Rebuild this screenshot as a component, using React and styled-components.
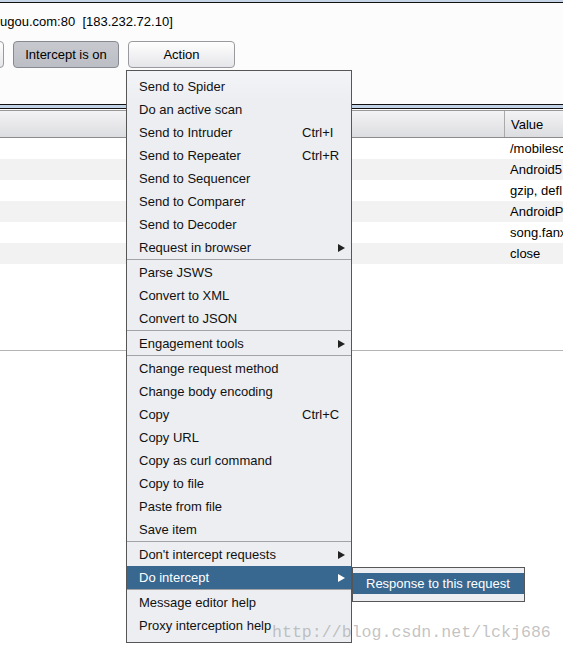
import React from 'react';
import styled, { createGlobalStyle } from 'styled-components';

const GlobalStyle = createGlobalStyle`
  html, body {
    margin: 0;
    padding: 0;
    background: #fff;
    overflow: hidden;
  }
  body {
    font-family: "Liberation Sans", Arial, sans-serif;
    font-size: 13px;
    color: #000;
  }
`

const Page = styled.div`
  position: relative;
  width: 563px;
  height: 655px;
  overflow: hidden;
  background: #fff;
`
const TopEdge = styled.div`
  height: 2px;
  background: #c6d5e8;
  border-bottom: 1px solid #111;
`
const UrlPanel = styled.div`
  height: 90px;
  padding-top: 11px;
  background: #fcfcfc;
`
const HostLine = styled.div`
  line-height: 16px;
  white-space: pre;
`
const ButtonRow = styled.div`
  display: flex;
  align-items: center;
  margin-top: 11px;
  margin-left: -80px;
`
const ToolButton = styled.button`
  height: 27px;
  width: ${p => p.$width}px;
  margin-right: ${p => p.$gap}px;
  padding: 0;
  font-family: "Liberation Sans", Arial, sans-serif;
  font-size: 13px;
  color: #000;
  border: 1px solid ${p => (p.$pressed ? '#868990' : '#9a9a9e')};
  border-radius: 4px;
  background: ${p => (p.$pressed
    ? 'linear-gradient(#c7c9cf, #bcbec5)'
    : 'linear-gradient(#fefefe, #e5e6e9)')};
`
const Splitter = styled.div`
  height: 3px;
  background: #c3d3e7;
  border-top: 1px solid #111;
  border-bottom: 1px solid #111;
  margin-bottom: 1px;
`
const TableHeader = styled.div`
  display: grid;
  grid-template-columns: 504px 1fr;
  height: 26px;
  border-top: 1px solid #999;
  border-bottom: 1px solid #8a8a8a;
  background: linear-gradient(#f3f3f5, #dcdde0);
`
const HeaderCell = styled.div`
  display: flex;
  align-items: center;
  padding-left: 6px;
  border-left: ${p => (p.$first ? 'none' : '1px solid #a9a9a9')};
`
const Rows = styled.div`
  height: 212px;
  border-bottom: 1px solid #b4b4b4;
`
const Row = styled.div`
  display: grid;
  grid-template-columns: 504px 1fr;
  height: 21px;
  align-items: center;
  background: ${p => (p.$odd ? '#f2f2f2' : '#fff')};
  white-space: nowrap;
`
const Cell = styled.div`
  padding-left: 6px;
  overflow: hidden;
`
const Menu = styled.div`
  position: absolute;
  left: 126px;
  top: 70px;
  width: 224px;
  padding: 4px 0 5px;
  border: 1px solid #565656;
  background: linear-gradient(#f3f4f7, #eceef2 30px, #eceef2);
  z-index: 2;
`
const Item = styled.div`
  position: relative;
  display: grid;
  grid-template-columns: 163px 1fr 12px;
  align-items: center;
  height: 23px;
  padding: 0 6px 0 12px;
  color: ${p => (p.$active ? '#fff' : '#111')};
  background: ${p => (p.$active ? '#386890' : 'transparent')};
  white-space: nowrap;
`
const Arrow = styled.span`
  justify-self: end;
  width: 0;
  height: 0;
  border-top: 4px solid transparent;
  border-bottom: 4px solid transparent;
  border-left: 7px solid ${p => (p.$light ? '#fff' : '#222')};
`
const Separator = styled.div`
  height: 1px;
  border-top: 1px solid #a2a3a6;
`
const SubMenu = styled.div`
  position: absolute;
  left: 225px;
  top: 1px;
  width: 171px;
  padding: 5px 0 7px;
  border: 1px solid #565656;
  background: #eceef2;
`
const SubItem = styled.div`
  height: 21px;
  display: flex;
  align-items: center;
  padding-left: 13px;
  color: #fff;
  background: #386890;
  white-space: nowrap;
`
const Watermark = styled.div`
  position: absolute;
  left: 272px;
  top: 623px;
  font-family: "Liberation Mono", "Courier New", monospace;
  font-size: 16.6px;
  color: rgba(175, 175, 175, 0.75);
  white-space: nowrap;
  z-index: 3;
`

const values = ['/mobilesc', 'Android5', 'gzip, defl', 'AndroidP', 'song.fanx', 'close']

const menuGroups = [
  [
    { label: 'Send to Spider' },
    { label: 'Do an active scan' },
    { label: 'Send to Intruder', key: 'Ctrl+I' },
    { label: 'Send to Repeater', key: 'Ctrl+R' },
    { label: 'Send to Sequencer' },
    { label: 'Send to Comparer' },
    { label: 'Send to Decoder' },
    { label: 'Request in browser', sub: true },
  ],
  [
    { label: 'Parse JSWS' },
    { label: 'Convert to XML' },
    { label: 'Convert to JSON' },
  ],
  [
    { label: 'Engagement tools', sub: true },
  ],
  [
    { label: 'Change request method' },
    { label: 'Change body encoding' },
    { label: 'Copy', key: 'Ctrl+C' },
    { label: 'Copy URL' },
    { label: 'Copy as curl command' },
    { label: 'Copy to file' },
    { label: 'Paste from file' },
    { label: 'Save item' },
  ],
  [
    { label: "Don't intercept requests", sub: true },
    { label: 'Do intercept', sub: true, active: true },
  ],
  [
    { label: 'Message editor help' },
    { label: 'Proxy interception help' },
  ],
]

const App = () => {
  return (
    <Page>
      <GlobalStyle />
      <TopEdge />
      <UrlPanel>
        <HostLine>ugou.com:80  [183.232.72.10]</HostLine>
        <ButtonRow>
          <ToolButton $width={84} $gap={9} aria-label="Forward" />
          <ToolButton $pressed $width={106} $gap={9}>Intercept is on</ToolButton>
          <ToolButton $width={107} $gap={0}>Action</ToolButton>
        </ButtonRow>
      </UrlPanel>
      <Splitter />
      <TableHeader>
        <HeaderCell $first />
        <HeaderCell>Value</HeaderCell>
      </TableHeader>
      <Rows>
        {values.map((v, i) => (
          <Row key={v} $odd={i % 2 === 1}>
            <Cell />
            <Cell>{v}</Cell>
          </Row>
        ))}
      </Rows>

      <Menu>
        {menuGroups.map((group, gi) => (
          <React.Fragment key={gi}>
            {gi > 0 && <Separator />}
            {group.map(item => (
              <Item key={item.label} $active={item.active}>
                <span>{item.label}</span>
                <span>{item.key}</span>
                {item.sub ? <Arrow $light={item.active} /> : <span />}
                {item.active && (
                  <SubMenu>
                    <SubItem>Response to this request</SubItem>
                  </SubMenu>
                )}
              </Item>
            ))}
          </React.Fragment>
        ))}
      </Menu>

      <Watermark>http://blog.csdn.net/lckj686</Watermark>
    </Page>
  )
}

export default App;
